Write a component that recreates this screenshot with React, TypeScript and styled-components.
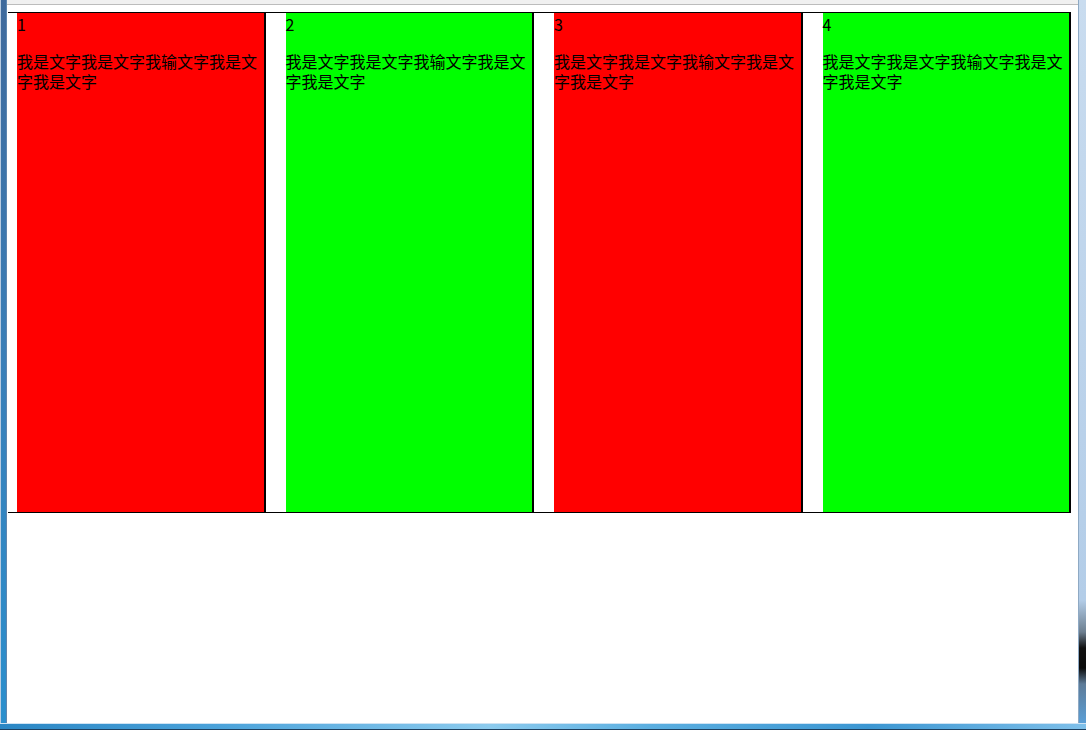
import React from 'react'
import styled, { createGlobalStyle } from 'styled-components'

const GlobalStyle = createGlobalStyle`
  html, body {
    margin: 0;
    padding: 0;
    overflow: hidden;
    background: #fff;
  }
  body {
    font-family: "Noto Sans CJK SC", "Liberation Sans", sans-serif;
    font-size: 16px;
    color: #000;
  }
`

const Window = styled.div`
  display: flex;
  flex-direction: column;
  height: 730px;
  width: 1086px;
`

const WindowBody = styled.div`
  display: flex;
  flex: 1;
  min-height: 0;
`

const LeftFrame = styled.div`
  background: linear-gradient(to bottom, #3f6a9c 0%, #3a7fb8 50%, #2b8fcd 100%);
  border-left: 1px solid #b8cbe0;
  border-right: 1px solid #5d86b0;
  flex-shrink: 0;
  width: 5px;
`

const RightFrame = styled.div`
  background: linear-gradient(
    to bottom,
    #c9dcef 0px,
    #b3cde8 600px,
    #6d7f90 632px,
    #111 648px,
    #0b0b0b 668px,
    #5d7b98 684px,
    #5b9fd6 723px
  );
  border-left: 1px solid #8ea9c4;
  flex-shrink: 0;
  width: 7px;
`

const BottomFrame = styled.div`
  background: linear-gradient(
    to right,
    #2a86c4 0%,
    #4aa2da 20%,
    #8ccbee 45%,
    #5aaee0 60%,
    #3b96d2 80%,
    #7fc0ea 100%
  );
  border-bottom: 1px solid #1d3f5f;
  border-top: 1px solid #cfe3f3;
  flex-shrink: 0;
  height: 5px;
`

const Client = styled.div`
  display: flex;
  flex: 1;
  flex-direction: column;
  min-width: 0;
`

const ToolbarEdge = styled.div`
  background: #f0f0f0;
  border-bottom: 1px solid #bcbcbc;
  flex-shrink: 0;
  height: 4px;
`

const Viewport = styled.div`
  background: #fff;
  flex: 1;
  padding: 7px 0 0 1px;
`

const Container = styled.div`
  border-bottom: 1px solid #000;
  border-top: 1px solid #000;
  display: flex;
  width: 1063px;
`

const Column = styled.div<{ $gutter: number; $color: string }>`
  background: ${p => p.$color};
  border-right: 2px solid #000;
  flex: 1;
  height: 499px;
  margin-left: ${p => p.$gutter}px;
  min-width: 0;
`

const Title = styled.div`
  line-height: 20px;
  padding-top: 1px;
`

const Text = styled.p`
  line-height: 20px;
  margin: 17px 0 0;
`

const columns = [
  { id: 1, color: '#ff0000', gutter: 9 },
  { id: 2, color: '#00ff00', gutter: 20 },
  { id: 3, color: '#ff0000', gutter: 20 },
  { id: 4, color: '#00ff00', gutter: 20 },
]

export default function App() {
  return (
    <>
      <GlobalStyle />
      <Window>
        <WindowBody>
          <LeftFrame />
          <Client>
            <ToolbarEdge />
            <Viewport>
              <Container>
                {columns.map(c => (
                  <Column key={c.id} $gutter={c.gutter} $color={c.color}>
                    <Title>{c.id}</Title>
                    <Text>我是文字我是文字我输文字我是文字我是文字</Text>
                  </Column>
                ))}
              </Container>
            </Viewport>
          </Client>
          <RightFrame />
        </WindowBody>
        <BottomFrame />
      </Window>
    </>
  )
}
